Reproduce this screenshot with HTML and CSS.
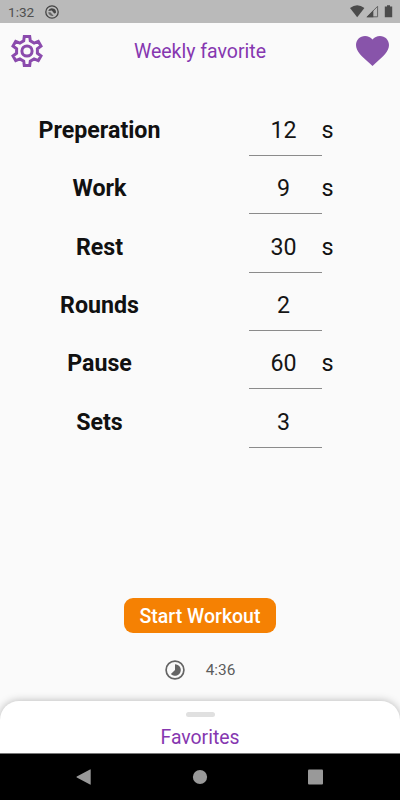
FILE: index.html
```
<!DOCTYPE html>
<html lang="en">
<head>
<meta charset="utf-8">
<title>Workout timer</title>
<link rel="stylesheet" href="styles.css">
</head>
<body>
<div class="screen">
  <div class="status">
    <span class="clock">1:32</span>
    <svg class="app-mark" width="14" height="14" viewBox="0 0 14 14"><circle cx="7" cy="7" r="6.2" fill="none" stroke="#444" stroke-width="1.3"/><path d="M3.2 6A4 4 0 0 1 10.9 8L9.2 8.6 6.8 5.6Z" fill="#444"/><path d="M3.2 7.2 5.4 7.2 8.6 10.8A4.2 4.2 0 0 1 3.2 7.2Z" fill="#666"/></svg>
    <svg class="signals" width="44" height="14" viewBox="0 0 44 14"><path d="M0 3Q7.2-2.4 14.4 3L7.2 12.2Z" fill="#4b4b4b"/><path d="M27.6 1.3V11.8H17.2Z" fill="none" stroke="#5b5b5b" stroke-width=".9"/><path d="M23.3 5.2V12.2H16.3Z" fill="#4b4b4b"/><path d="M37 .2h3v1.2h2.2v10.8h-7.4V1.4H37Z" fill="#4b4b4b"/></svg>
  </div>
  <header class="bar">
    <svg width="34" height="34" viewBox="-17 -17 34 34" fill="none" stroke="#8b4bad" stroke-width="3"><path d="M-2.7-14.6H2.7L3.3-10.1 7.1-7.9 11.3-9.6 14-5 10.4-2.2V2.2L14 5 11.3 9.6 7.1 7.9 3.3 10.1 2.7 14.6H-2.7L-3.3 10.1-7.1 7.9-11.3 9.6-14 5-10.4 2.2V-2.2L-14-5-11.3-9.6-7.1-7.9-3.3-10.1Z"/><circle r="5.1"/></svg>
    <h1>Weekly favorite</h1>
    <svg width="33" height="30" viewBox="2 3 20 18.35" preserveAspectRatio="none"><path fill="#8854aa" d="m12 21.35-1.45-1.32C5.4 15.36 2 12.28 2 8.5 2 5.42 4.42 3 7.5 3c1.74 0 3.41.81 4.5 2.09C13.09 3.81 14.76 3 16.5 3 19.58 3 22 5.42 22 8.5c0 3.78-3.4 6.86-8.55 11.54L12 21.35z"/></svg>
  </header>
  <main class="settings">
    <div class="row"><label>Preperation</label><span class="value">12</span><span class="unit">s</span></div>
    <div class="row"><label>Work</label><span class="value">9</span><span class="unit">s</span></div>
    <div class="row"><label>Rest</label><span class="value">30</span><span class="unit">s</span></div>
    <div class="row"><label>Rounds</label><span class="value">2</span></div>
    <div class="row"><label>Pause</label><span class="value">60</span><span class="unit">s</span></div>
    <div class="row"><label>Sets</label><span class="value">3</span></div>
  </main>
  <button class="start">Start Workout</button>
  <div class="total">
    <svg width="20" height="20" viewBox="0 0 20 20"><circle cx="10" cy="10" r="8.9" fill="none" stroke="#656565" stroke-width="1.7"/><path d="M10 4.2A5.8 5.8 0 1 1 5.9 14.1L10 10Z" fill="#656565"/></svg>
    <span>4:36</span>
  </div>
  <section class="sheet"><div class="handle"></div><h2>Favorites</h2></section>
  <nav class="nav">
    <svg width="248" height="16" viewBox="0 0 248 16" fill="#999"><path d="M14.7.8V15.2Q14.7 16 14 15.5L.8 8.5Q0 8 .8 7.5L14 .5Q14.7 0 14.7.8Z"/><circle cx="124" cy="8" r="7.1"/><rect x="232" y=".5" width="15" height="15" rx="1"/></svg>
  </nav>
</div>
</body>
</html>
```
FILE: styles.css
```
* { box-sizing: border-box; }
body { margin: 0; font-family: Roboto, sans-serif; }
h1, h2 { margin: 0; font-weight: 400; color: #8637b0; }
svg { display: block; flex: none; }
.screen { width: 400px; height: 800px; display: flex; flex-direction: column; align-items: center; background: #fafafa; overflow: hidden; }
.status { width: 100%; height: 23px; flex: none; display: flex; align-items: center; padding: 1px 6px 0 8px; background: #bababa; }
.clock { width: 37px; font-size: 13.6px; color: #505050; }
.signals { margin-left: auto; }
.bar { width: 100%; height: 55px; flex: none; display: flex; align-items: center; justify-content: space-between; padding: 0 11px 0 10px; }
.bar h1 { font-size: 19.5px; padding-top: 2px; }
.settings { width: 100%; padding-top: 24px; height: 520px; flex: none; }
.row { display: flex; height: 58.33px; align-items: flex-start; color: #111; font-size: 23.4px; line-height: 56px; }
.row label { width: 199px; text-align: center; font-weight: 700; font-size: 23.2px; }
.value { width: 73px; height: 54px; margin-left: 49.5px; padding-right: 3px; text-align: center; border-bottom: 1px solid #8b8b8b; font-size: 23.2px; color: #151515; line-height: 57px; }
.unit { line-height: 57px; }
.start { width: 152px; height: 34.5px; flex: none; border: 0; border-radius: 9px; padding: 2px 0 0; background: #f58103; color: #fff; font: 500 19.5px/34px Roboto, sans-serif; }
.total { height: 68px; display: flex; align-items: center; gap: 21px; padding-top: 7px; color: #5c5c5c; font-size: 15.4px; }
.sheet { width: 100%; height: 53px; flex: none; display: flex; flex-direction: column; align-items: center; background: #fff; border-radius: 19px 19px 0 0; box-shadow: 0 0 9px rgba(0,0,0,.28); position: relative; top: 1px; }
.handle { width: 29px; height: 5px; margin-top: 11px; border-radius: 3px; background: #e0e0e0; }
.sheet h2 { font-size: 19.4px; line-height: 24px; margin-top: 9px; }
.nav { width: 100%; height: 47px; margin-top: auto; flex: none; padding: 15px 0 0 76px; background: #000; border-top: 1px solid #777; position: relative; }
```
